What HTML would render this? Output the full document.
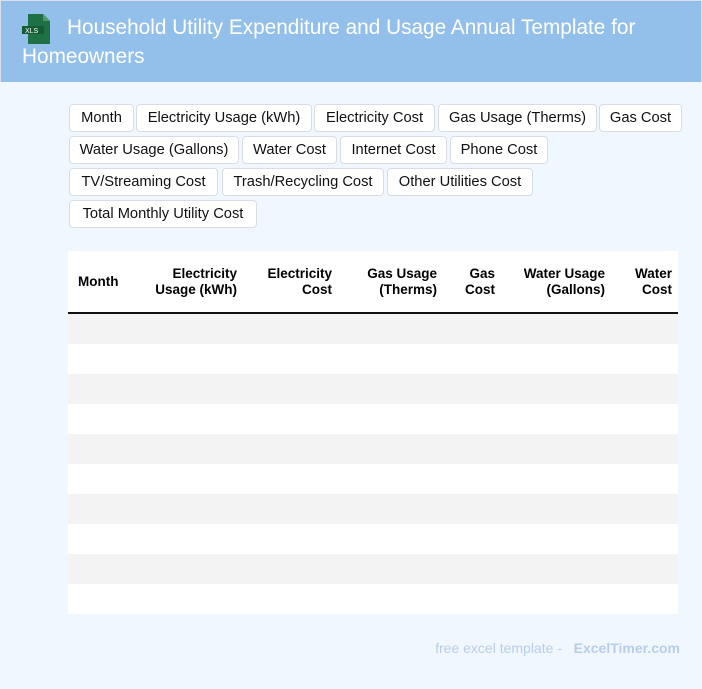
<!DOCTYPE html>
<html><head><meta charset="utf-8"><style>
*{margin:0;padding:0;box-sizing:border-box}
body{width:702px;height:689px;background:#f0f7ff;font-family:"Liberation Sans",Roboto,sans-serif;position:relative;overflow:hidden}
.hdr{position:absolute;left:0;top:0;width:702px;height:82px;background:#93c0eb;border:1px solid #dde;border-bottom:none}
.title{position:absolute;left:22px;top:13px;width:670px;color:#fff;font-size:20.8px;line-height:29px;text-indent:45px}
.icon{position:absolute;left:22px;top:14px}
.tag{position:absolute;height:28px;background:#fff;border:1px solid #d8dde3;border-radius:4px;font-size:14.7px;line-height:26px;text-align:center;color:#111;white-space:nowrap;overflow:hidden}
.tbl{position:absolute;left:68px;top:251px;width:610px;height:363px;background:#fff}
.th{position:absolute;font-weight:bold;font-size:13.5px;line-height:16px;color:#000;text-align:right}
.line{position:absolute;left:0;top:61px;width:610px;height:2px;background:#111}
.r{position:absolute;left:0;width:610px;height:30px}
.foot{position:absolute;right:22px;top:640px;font-size:14px;color:#b8cdea}
</style></head><body>
<div class="hdr"></div>
<svg class="icon" width="30" height="30" viewBox="0 0 30 30"><path d="M6 0h15l7 7v23H6z" fill="#1e7145"/><path d="M21 0v7h7z" fill="#4c9a6a"/><rect x="0" y="12" width="22" height="8" fill="#145c36"/><text x="3" y="19" font-size="7" fill="#fff" font-family="Liberation Sans">XLS</text></svg>
<div class="title">Household Utility Expenditure and Usage Annual Template for Homeowners</div>

<div class="tag" style="left:69px;top:104px;width:65px">Month</div>
<div class="tag" style="left:136px;top:104px;width:176px">Electricity Usage (kWh)</div>
<div class="tag" style="left:314px;top:104px;width:121px">Electricity Cost</div>
<div class="tag" style="left:438px;top:104px;width:159px">Gas Usage (Therms)</div>
<div class="tag" style="left:599px;top:104px;width:83px">Gas Cost</div>
<div class="tag" style="left:69px;top:136px;width:170px">Water Usage (Gallons)</div>
<div class="tag" style="left:242px;top:136px;width:95px">Water Cost</div>
<div class="tag" style="left:340px;top:136px;width:107px">Internet Cost</div>
<div class="tag" style="left:450px;top:136px;width:98px">Phone Cost</div>
<div class="tag" style="left:69px;top:168px;width:149px">TV/Streaming Cost</div>
<div class="tag" style="left:222px;top:168px;width:162px">Trash/Recycling Cost</div>
<div class="tag" style="left:387px;top:168px;width:146px">Other Utilities Cost</div>
<div class="tag" style="left:69px;top:200px;width:188px">Total Monthly Utility Cost</div>

<div class="tbl">
<div class="th" style="left:10px;top:23px;text-align:left">Month</div>
<div class="th" style="right:441px;top:15px">Electricity<br>Usage (kWh)</div>
<div class="th" style="right:346px;top:15px">Electricity<br>Cost</div>
<div class="th" style="right:241px;top:15px">Gas Usage<br>(Therms)</div>
<div class="th" style="right:183px;top:15px">Gas<br>Cost</div>
<div class="th" style="right:73px;top:15px">Water Usage<br>(Gallons)</div>
<div class="th" style="right:6px;top:15px">Water<br>Cost</div>
<div class="line"></div>
<div class="r" style="top:63px;background:#f3f3f3"></div>
<div class="r" style="top:123px;background:#f3f3f3"></div>
<div class="r" style="top:183px;background:#f3f3f3"></div>
<div class="r" style="top:243px;background:#f3f3f3"></div>
<div class="r" style="top:303px;background:#f3f3f3"></div>
</div>
<div class="foot">free excel template - &nbsp; <b>ExcelTimer.com</b></div>
</body></html>
